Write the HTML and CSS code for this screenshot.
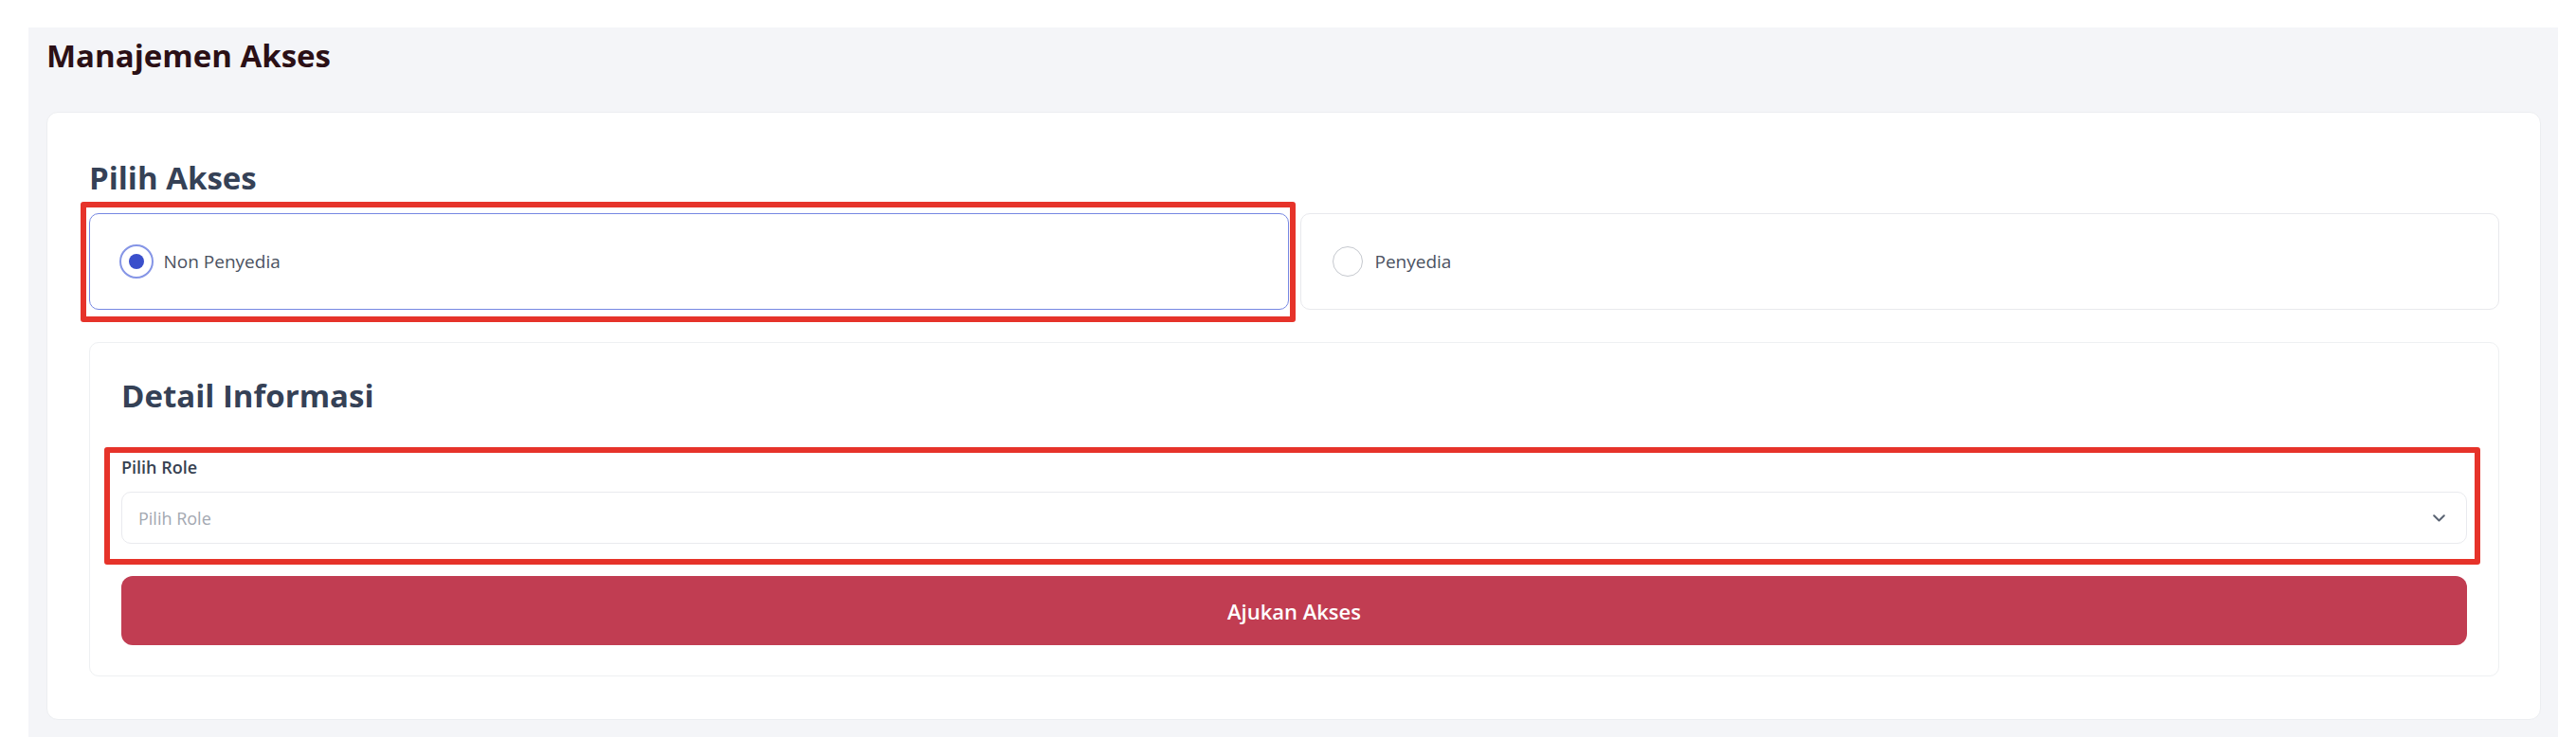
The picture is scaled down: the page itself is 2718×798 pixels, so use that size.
FILE: index.html
```html
<!DOCTYPE html>
<html lang="id">
<head>
<meta charset="utf-8">
<title>Manajemen Akses</title>
<link rel="stylesheet" href="styles.css">
</head>
<body>
<div class="page">
  <div class="panel">
    <h1 class="page-title">Manajemen Akses</h1>
    <div class="card">
      <h2 class="section-title">Pilih Akses</h2>
      <div class="options">
        <label class="option option--active">
          <span class="radio-slot"><span class="radio radio--checked"><span class="radio-dot"></span></span></span>
          <span class="option-label">Non Penyedia</span>
          <span class="mark mark--option"></span>
        </label>
        <label class="option">
          <span class="radio-slot"><span class="radio"></span></span>
          <span class="option-label">Penyedia</span>
        </label>
      </div>
      <div class="detail">
        <h2 class="section-title">Detail Informasi</h2>
        <div class="field">
          <div class="field-label">Pilih Role</div>
          <div class="select">
            <span class="placeholder">Pilih Role</span>
            <svg class="chevron" width="13" height="8" viewBox="0 0 13 8" aria-hidden="true"><path d="M1.2 1.2 L6.5 6.5 L11.8 1.2" fill="none" stroke="#5b6473" stroke-width="2" stroke-linecap="round" stroke-linejoin="round"/></svg>
          </div>
          <span class="mark mark--field"></span>
        </div>
        <button class="submit" type="button">Ajukan Akses</button>
      </div>
    </div>
  </div>
</div>
</body>
</html>
```
FILE: styles.css
```css
html, body {
  margin: 0;
  padding: 0;
  background: #ffffff;
}

body {
  font-family: "Open Sans", "Noto Sans", sans-serif;
}

.page {
  padding: 29px 19px 20px 30px;
}

.panel {
  background: #f4f5f8;
  padding: 7px 18px 18px 19px;
}

.page-title {
  margin: 0 0 36px 0;
  font-size: 33px;
  line-height: 46px;
  font-weight: 700;
  color: #2b1016;
}

.card {
  background: #ffffff;
  border: 1px solid #eceef1;
  border-radius: 12px;
  padding: 46px 43px 45px 44px;
}

.section-title {
  margin: 0;
  font-size: 33px;
  line-height: 45px;
  font-weight: 700;
  color: #354156;
}

.card > .section-title {
  margin-bottom: 15px;
}

.options {
  display: grid;
  grid-template-columns: 1fr 1fr;
  gap: 12px;
  margin-bottom: 34px;
}

.option {
  position: relative;
  box-sizing: border-box;
  height: 102px;
  display: flex;
  align-items: center;
  gap: 11px;
  padding-left: 31px;
  border: 1px solid #e8e9ed;
  border-radius: 10px;
  background: #ffffff;
}

.option--active {
  border: 1.5px solid #7687e2;
  padding-left: 30.5px;
}

.radio-slot {
  width: 36px;
  height: 36px;
  display: flex;
  align-items: center;
  justify-content: center;
}

.radio {
  box-sizing: border-box;
  width: 32px;
  height: 32px;
  border-radius: 50%;
  border: 1.5px solid #c5c8ce;
  background: #ffffff;
}

.radio--checked {
  width: 36px;
  height: 36px;
  border: 2px solid #8595e6;
  display: flex;
  align-items: center;
  justify-content: center;
}

.radio-dot {
  width: 16px;
  height: 16px;
  border-radius: 50%;
  background: #3a4fcb;
}

.option-label {
  font-size: 19px;
  line-height: 26px;
  color: #4b5261;
}

.mark {
  position: absolute;
  border: 6px solid #e6332a;
  border-radius: 3px;
  pointer-events: none;
}

.mark--option {
  top: -13px;
  right: -8px;
  bottom: -14px;
  left: -10px;
}

.detail {
  border: 1px solid #eef0f2;
  border-radius: 10px;
  padding: 33px 33px 32px 33px;
}

.field {
  position: relative;
  margin-top: 41px;
}

.field-label {
  font-size: 18px;
  line-height: 24px;
  font-weight: 600;
  color: #374151;
  margin-bottom: 14px;
}

.select {
  box-sizing: border-box;
  height: 55px;
  display: flex;
  align-items: center;
  justify-content: space-between;
  padding: 0 22px 0 17px;
  border: 1px solid #e9eaee;
  border-radius: 10px;
  background: #ffffff;
}

.placeholder {
  font-size: 18px;
  line-height: 24px;
  color: #a3a8b1;
}

.chevron {
  display: block;
}

.mark--field {
  top: -9px;
  right: -14px;
  bottom: -22px;
  left: -18px;
}

.submit {
  display: flex;
  align-items: center;
  justify-content: center;
  width: 100%;
  height: 73px;
  margin-top: 34px;
  border: none;
  border-radius: 12px;
  background: #c13d52;
  color: #ffffff;
  font-family: "Open Sans", "Noto Sans", sans-serif;
  font-size: 22px;
  font-weight: 600;
  padding: 0;
}
```
